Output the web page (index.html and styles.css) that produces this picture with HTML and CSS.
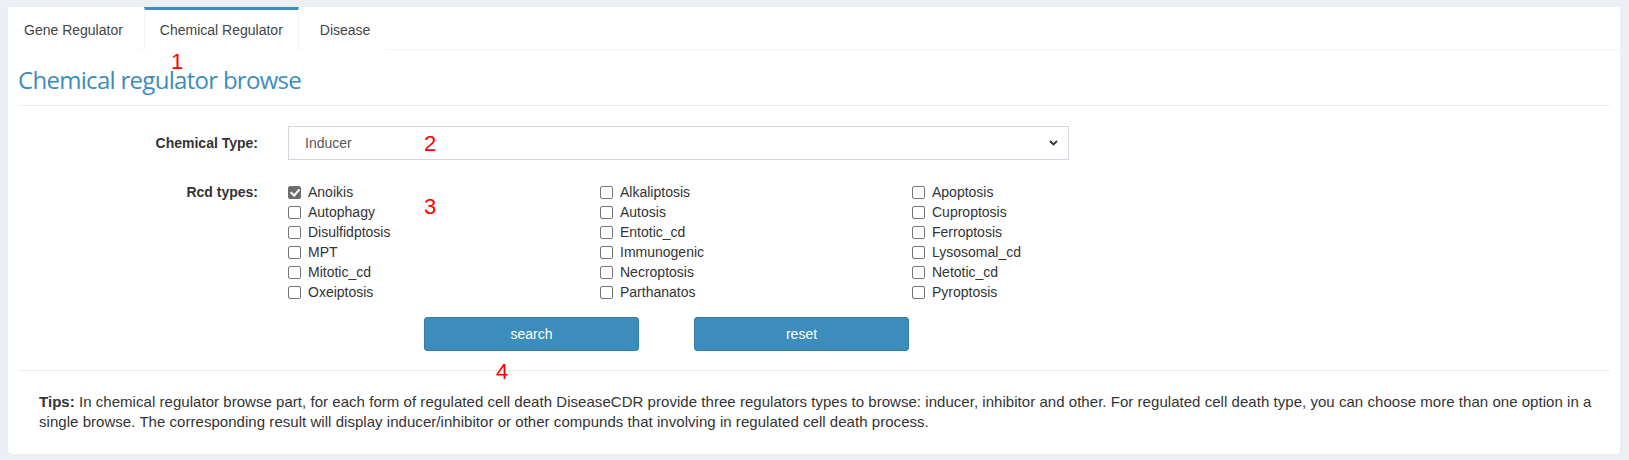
FILE: index.html
```html
<!DOCTYPE html>
<html lang="en">
<head>
<meta charset="utf-8">
<title>Chemical regulator browse</title>
<link rel="stylesheet" href="styles.css">
</head>
<body>
<div class="card">
  <ul class="tabs">
    <li class="tab"><a class="tab-link">Gene Regulator</a></li>
    <li class="tab active"><a class="tab-link">Chemical Regulator</a></li>
    <li class="tab"><a class="tab-link">Disease</a></li>
  </ul>
  <div class="content">
    <h2 class="title">Chemical regulator browse</h2>
    <form class="form">
      <div class="row row-select">
        <label class="label">Chemical Type:</label>
        <div class="select-wrap">
          <select class="select">
            <option>Inducer</option>
            <option>Inhibitor</option>
            <option>Other</option>
          </select>
          <svg class="chev" width="9" height="6" viewBox="0 0 9 6"><path d="M1 1 L4.5 4.5 L8 1" fill="none" stroke="#333" stroke-width="1.8"/></svg>
        </div>
      </div>
      <div class="row row-check">
        <label class="label">Rcd types:</label>
        <div class="checks">
          <label class="check"><input type="checkbox" class="box" checked><span>Anoikis</span></label>
          <label class="check"><input type="checkbox" class="box"><span>Alkaliptosis</span></label>
          <label class="check"><input type="checkbox" class="box"><span>Apoptosis</span></label>
          <label class="check"><input type="checkbox" class="box"><span>Autophagy</span></label>
          <label class="check"><input type="checkbox" class="box"><span>Autosis</span></label>
          <label class="check"><input type="checkbox" class="box"><span>Cuproptosis</span></label>
          <label class="check"><input type="checkbox" class="box"><span>Disulfidptosis</span></label>
          <label class="check"><input type="checkbox" class="box"><span>Entotic_cd</span></label>
          <label class="check"><input type="checkbox" class="box"><span>Ferroptosis</span></label>
          <label class="check"><input type="checkbox" class="box"><span>MPT</span></label>
          <label class="check"><input type="checkbox" class="box"><span>Immunogenic</span></label>
          <label class="check"><input type="checkbox" class="box"><span>Lysosomal_cd</span></label>
          <label class="check"><input type="checkbox" class="box"><span>Mitotic_cd</span></label>
          <label class="check"><input type="checkbox" class="box"><span>Necroptosis</span></label>
          <label class="check"><input type="checkbox" class="box"><span>Netotic_cd</span></label>
          <label class="check"><input type="checkbox" class="box"><span>Oxeiptosis</span></label>
          <label class="check"><input type="checkbox" class="box"><span>Parthanatos</span></label>
          <label class="check"><input type="checkbox" class="box"><span>Pyroptosis</span></label>
        </div>
      </div>
      <div class="buttons">
        <button type="button" class="btn">search</button>
        <button type="reset" class="btn">reset</button>
      </div>
    </form>
    <div class="tips">
      <p class="tips-text"><b>Tips:</b> In chemical regulator browse part, for each form of regulated cell death DiseaseCDR provide three regulators types to browse: inducer, inhibitor and other. For regulated cell death type, you can choose more than one option in a single browse. The corresponding result will display inducer/inhibitor or other compunds that involving in regulated cell death process.</p>
    </div>
  </div>
  <span class="mark m1">1</span>
  <span class="mark m2">2</span>
  <span class="mark m3">3</span>
  <span class="mark m4">4</span>
</div>
</body>
</html>
```

FILE: styles.css
```css
* { box-sizing: border-box; }
html, body { margin: 0; padding: 0; }
body {
  background: #ecf0f5;
  padding: 7px 9px 0 8px;
  font-family: "Liberation Sans", Arial, sans-serif;
  font-size: 14px;
  line-height: 20px;
  color: #333;
}
.card {
  position: relative;
  background: #fff;
  border-radius: 3px;
  box-shadow: 0 1px 1px rgba(0,0,0,0.1);
  height: 447px;
}
.tabs {
  list-style: none;
  margin: 0;
  padding: 0;
  display: flex;
  border-bottom: 1px solid #f4f4f4;
}
.tab {
  border-top: 3px solid transparent;
  border-left: 1px solid transparent;
  border-right: 1px solid transparent;
  margin-right: 5px;
  margin-bottom: -1px;
  background: #fff;
}
.tab.active {
  border-top-color: #3c8dbc;
  border-left-color: #f4f4f4;
  border-right-color: #f4f4f4;
}
.tab-link {
  display: block;
  padding: 10px 15px;
  color: #444;
  line-height: 20px;
}
.content {
  padding: 0 10px 10px;
}
.title {
  margin: 15px 0 0;
  padding-bottom: 10px;
  border-bottom: 1px solid #eee;
  font-family: "Open Sans", sans-serif;
  font-weight: 400;
  font-size: 24px;
  letter-spacing: -0.7px;
  line-height: 30px;
  color: #3c8dbc;
}
.form { padding-top: 20px; }
.row {
  display: flex;
  align-items: flex-start;
}
.label {
  width: 240px;
  margin-right: 30px;
  text-align: right;
  font-weight: 700;
}
.row-select { align-items: center; margin-bottom: 22px; }
.select-wrap {
  position: relative;
  width: 781px;
}
.select {
  display: block;
  width: 100%;
  height: 34px;
  border: 1px solid #d2d6de;
  border-radius: 0;
  background: #fff;
  padding: 0 16px;
  font-family: "Liberation Sans", Arial, sans-serif;
  font-size: 14px;
  color: #555;
  appearance: none;
  -webkit-appearance: none;
}
.chev {
  position: absolute;
  right: 11px;
  top: 14px;
}
.checks {
  display: grid;
  grid-template-columns: repeat(3, 312px);
}
.check {
  display: flex;
  align-items: center;
  height: 20px;
  color: #333;
}
.box {
  appearance: none;
  -webkit-appearance: none;
  width: 13px;
  height: 13px;
  margin: 0 7px 0 0;
  border: 1px solid #767676;
  border-radius: 2px;
  background: #fff;
  position: relative;
}
.box:checked {
  background: #6d6d6d;
  border-color: #6d6d6d;
}
.box:checked::after {
  content: "";
  position: absolute;
  left: 3px;
  top: 0px;
  width: 4px;
  height: 7px;
  border-right: 2px solid #fff;
  border-bottom: 2px solid #fff;
  transform: rotate(40deg);
}
.buttons {
  display: flex;
  gap: 55px;
  margin: 15px 0 0 406px;
}
.btn {
  width: 215px;
  height: 34px;
  background: #3c8dbc;
  border: 1px solid #367fa9;
  border-radius: 3px;
  color: #fff;
  font-family: "Liberation Sans", Arial, sans-serif;
  font-size: 14px;
}
.tips {
  margin-top: 19px;
  border-top: 1px solid #eee;
  padding: 21px 0 0 21px;
}
.tips-text {
  margin: 0;
  font-size: 15px;
  letter-spacing: 0.04px;
  line-height: 20px;
}
.mark {
  position: absolute;
  color: #ff0000;
  font-size: 22px;
  line-height: 22px;
}
.m1 { left: 163px; top: 44px; }
.m2 { left: 416px; top: 126px; }
.m3 { left: 416px; top: 189px; }
.m4 { left: 488px; top: 354px; }
```
